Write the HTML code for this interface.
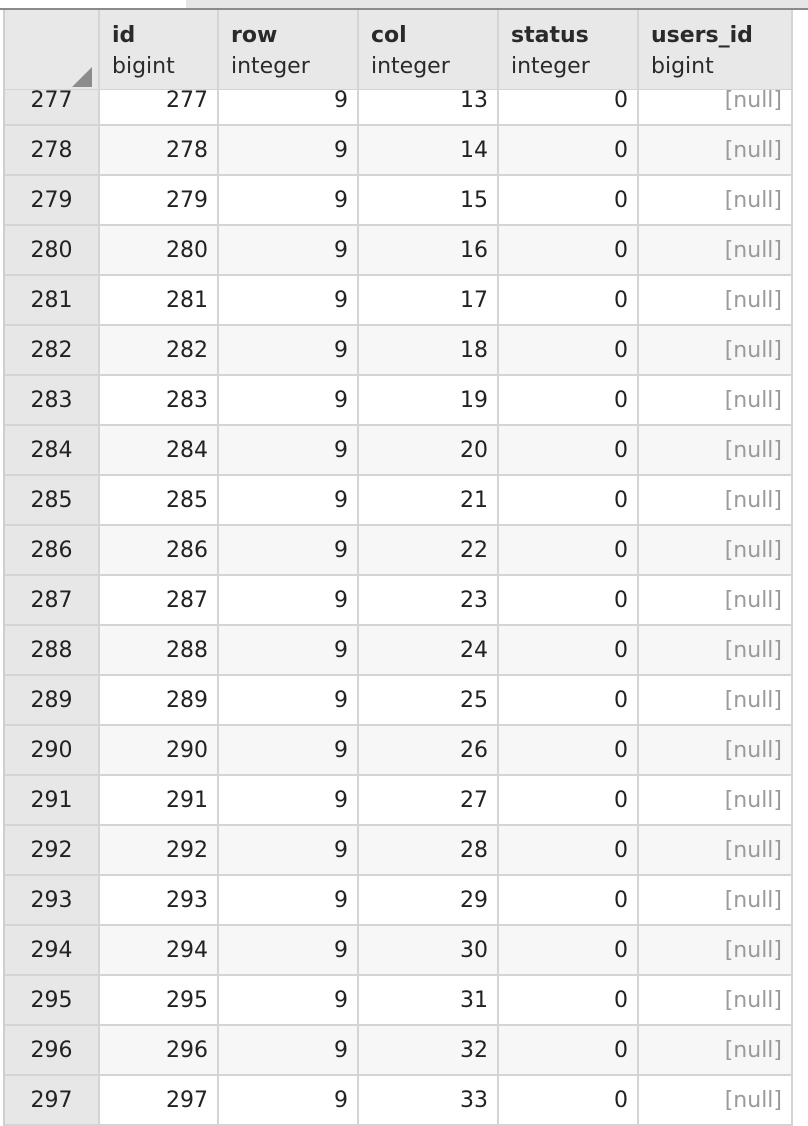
<!DOCTYPE html>
<html><head><meta charset="utf-8"><style>
*{box-sizing:border-box;margin:0;padding:0}
body{width:808px;height:1122px;overflow:hidden;background:#fff;font-family:"DejaVu Sans","Liberation Sans",sans-serif;color:#222;position:relative}
.tabs{position:absolute;left:0;top:0;width:808px;height:8px;background:#e6e6e6}
.tabs .w{position:absolute;left:0;top:0;width:186px;height:8px;background:#fff}
.topline{position:absolute;left:0;top:8px;width:808px;height:2px;background:#8a8a8a}
.grid{position:absolute;left:3px;top:10px;border-left:2px solid #cfcfcf;width:790px}
.r{display:flex;height:50px;border-bottom:2px solid #d4d4d4;font-size:22px;line-height:49px}
.r>div{border-right:2px solid #d4d4d4;text-align:right;padding-right:9px;white-space:nowrap}
.r>div:nth-child(1){width:95px;text-align:center;padding:0;background:#e7e7e7}
.r>div:nth-child(2){width:119px}
.r>div:nth-child(3){width:140px}
.r>div:nth-child(4){width:140px}
.r>div:nth-child(5){width:140px}
.r>div:nth-child(6){width:154px}
.r.a>div{background:#f7f7f7}
.r.a>div:nth-child(1){background:#e7e7e7}
.n{color:#9a9a9a}
.h{display:flex;height:80px;background:#e8e8e8;border-bottom:1px solid #d4d4d4}
.h>div{border-right:2px solid #d4d4d4;padding-left:12px;padding-top:10px;font-size:22px;line-height:31px;color:#2a2a2a}
.h b{display:block;font-weight:bold}
.h>div:nth-child(1){width:95px;position:relative;padding:0}
.h>div:nth-child(2){width:119px}
.h>div:nth-child(3){width:140px}
.h>div:nth-child(4){width:140px}
.h>div:nth-child(5){width:140px}
.h>div:nth-child(6){width:154px}
.tri{position:absolute;right:6px;bottom:2px;width:0;height:0;border-left:20px solid transparent;border-bottom:20px solid #8c8c8c}
.first{height:36px;line-height:21px}
</style></head><body>
<div class="tabs"><div class="w"></div></div>
<div class="topline"></div>
<div class="grid">
<div class="h"><div><div class="tri"></div></div><div><b>id</b>bigint</div><div><b>row</b>integer</div><div><b>col</b>integer</div><div><b>status</b>integer</div><div><b>users_id</b>bigint</div></div>
<div class="r first"><div>277</div><div>277</div><div>9</div><div>13</div><div>0</div><div class="n">[null]</div></div>
<div class="r a"><div>278</div><div>278</div><div>9</div><div>14</div><div>0</div><div class="n">[null]</div></div>
<div class="r"><div>279</div><div>279</div><div>9</div><div>15</div><div>0</div><div class="n">[null]</div></div>
<div class="r a"><div>280</div><div>280</div><div>9</div><div>16</div><div>0</div><div class="n">[null]</div></div>
<div class="r"><div>281</div><div>281</div><div>9</div><div>17</div><div>0</div><div class="n">[null]</div></div>
<div class="r a"><div>282</div><div>282</div><div>9</div><div>18</div><div>0</div><div class="n">[null]</div></div>
<div class="r"><div>283</div><div>283</div><div>9</div><div>19</div><div>0</div><div class="n">[null]</div></div>
<div class="r a"><div>284</div><div>284</div><div>9</div><div>20</div><div>0</div><div class="n">[null]</div></div>
<div class="r"><div>285</div><div>285</div><div>9</div><div>21</div><div>0</div><div class="n">[null]</div></div>
<div class="r a"><div>286</div><div>286</div><div>9</div><div>22</div><div>0</div><div class="n">[null]</div></div>
<div class="r"><div>287</div><div>287</div><div>9</div><div>23</div><div>0</div><div class="n">[null]</div></div>
<div class="r a"><div>288</div><div>288</div><div>9</div><div>24</div><div>0</div><div class="n">[null]</div></div>
<div class="r"><div>289</div><div>289</div><div>9</div><div>25</div><div>0</div><div class="n">[null]</div></div>
<div class="r a"><div>290</div><div>290</div><div>9</div><div>26</div><div>0</div><div class="n">[null]</div></div>
<div class="r"><div>291</div><div>291</div><div>9</div><div>27</div><div>0</div><div class="n">[null]</div></div>
<div class="r a"><div>292</div><div>292</div><div>9</div><div>28</div><div>0</div><div class="n">[null]</div></div>
<div class="r"><div>293</div><div>293</div><div>9</div><div>29</div><div>0</div><div class="n">[null]</div></div>
<div class="r a"><div>294</div><div>294</div><div>9</div><div>30</div><div>0</div><div class="n">[null]</div></div>
<div class="r"><div>295</div><div>295</div><div>9</div><div>31</div><div>0</div><div class="n">[null]</div></div>
<div class="r a"><div>296</div><div>296</div><div>9</div><div>32</div><div>0</div><div class="n">[null]</div></div>
<div class="r"><div>297</div><div>297</div><div>9</div><div>33</div><div>0</div><div class="n">[null]</div></div>
</div>
</body></html>
